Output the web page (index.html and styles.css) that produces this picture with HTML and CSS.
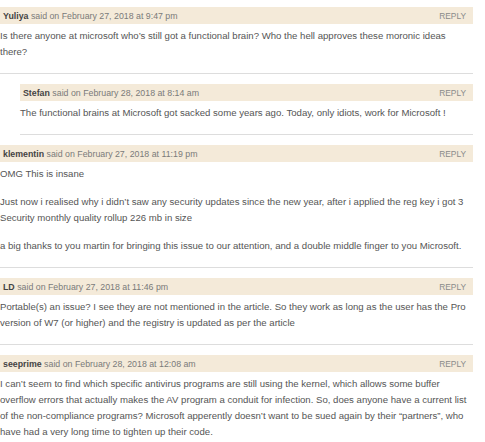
FILE: index.html
```html
<!DOCTYPE html>
<html>
<head>
<meta charset="utf-8">
<link rel="stylesheet" href="styles.css">
</head>
<body>
<div class="comments">
  <div class="comment">
    <div class="bar"><span class="meta"><b class="author">Yuliya</b> said on February 27, 2018 at 9:47 pm</span><span class="reply">REPLY</span></div>
    <div class="body"><p>Is there anyone at microsoft who’s still got a functional brain? Who the hell approves these moronic ideas there?</p></div>
  </div>
  <div class="comment child">
    <div class="bar"><span class="meta"><b class="author">Stefan</b> said on February 28, 2018 at 8:14 am</span><span class="reply">REPLY</span></div>
    <div class="body"><p>The functional brains at Microsoft got sacked some years ago. Today, only idiots, work for Microsoft !</p></div>
  </div>
  <div class="comment">
    <div class="bar"><span class="meta"><b class="author">klementin</b> said on February 27, 2018 at 11:19 pm</span><span class="reply">REPLY</span></div>
    <div class="body">
      <p>OMG This is insane</p>
      <p>Just now i realised why i didn’t saw any security updates since the new year, after i applied the reg key i got 3 Security monthly quality rollup 226 mb in size</p>
      <p>a big thanks to you martin for bringing this issue to our attention, and a double middle finger to you Microsoft.</p>
    </div>
  </div>
  <div class="comment">
    <div class="bar"><span class="meta"><b class="author">LD</b> said on February 27, 2018 at 11:46 pm</span><span class="reply">REPLY</span></div>
    <div class="body"><p>Portable(s) an issue? I see they are not mentioned in the article. So they work as long as the user has the Pro version of W7 (or higher) and the registry is updated as per the article</p></div>
  </div>
  <div class="comment">
    <div class="bar"><span class="meta"><b class="author">seeprime</b> said on February 28, 2018 at 12:08 am</span><span class="reply">REPLY</span></div>
    <div class="body"><p>I can’t seem to find which specific antivirus programs are still using the kernel, which allows some buffer overflow errors that actually makes the AV program a conduit for infection. So, does anyone have a current list of the non-compliance programs? Microsoft apperently doesn’t want to be sued again by their “partners”, who have had a very long time to tighten up their code.</p></div>
  </div>
</div>
</body>
</html>
```
FILE: styles.css
```css
* { box-sizing: border-box; }
html, body { margin: 0; padding: 0; background: #fff; }
body {
  font-family: "Liberation Sans", Arial, sans-serif;
  color: #555;
  padding: 7px 12px 0 0;
}
.comments { display: flex; flex-direction: column; }
.comment {
  border-bottom: 1px solid #dddddd;
  padding-bottom: 13px;
  margin-bottom: 10px;
}
.comment.child { margin-left: 20px; }
.bar {
  display: flex;
  align-items: center;
  justify-content: space-between;
  height: 17px;
  background: #f4ead9;
  padding: 0 7px 0 3px;
  font-size: 8.8px;
}
.meta { color: #7a7a7a; }
.author { color: #444; font-weight: bold; }
.reply { color: #8a8a8a; font-size: 8.4px; }
.body { padding-top: 4px; font-size: 9.6px; line-height: 16px; color: #555; }
.body p { margin: 0 0 12px 0; }
.body p:last-child { margin-bottom: 0; }
```
